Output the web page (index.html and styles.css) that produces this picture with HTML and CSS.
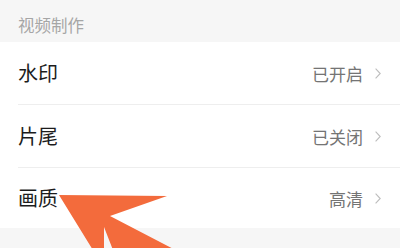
FILE: index.html
```html
<!DOCTYPE html>
<html lang="zh">
<head>
<meta charset="utf-8">
<link rel="stylesheet" href="styles.css">
</head>
<body>
<div class="page">
  <div class="section-title">视频制作</div>
  <div class="list">
    <div class="row">
      <span class="label">水印</span>
      <span class="value">已开启<svg class="chev" viewBox="0 0 6 11" width="6" height="11"><path d="M0.6 0.6 L5.2 5.5 L0.6 10.4" fill="none" stroke="#bdbdbd" stroke-width="1.1"/></svg></span>
    </div>
    <div class="row">
      <span class="label">片尾</span>
      <span class="value">已关闭<svg class="chev" viewBox="0 0 6 11" width="6" height="11"><path d="M0.6 0.6 L5.2 5.5 L0.6 10.4" fill="none" stroke="#bdbdbd" stroke-width="1.1"/></svg></span>
    </div>
    <div class="row last">
      <span class="label">画质</span>
      <span class="value">高清<svg class="chev" viewBox="0 0 6 11" width="6" height="11"><path d="M0.6 0.6 L5.2 5.5 L0.6 10.4" fill="none" stroke="#bdbdbd" stroke-width="1.1"/></svg></span>
    </div>
  </div>
  <div class="footer-band"></div>
  <svg class="arrow" viewBox="0 0 400 248" width="400" height="248">
    <polygon points="59,195 167,196 110,216 210,268 120,268 104,227 104,268" fill="#f36b3c"/>
  </svg>
</div>
</body>
</html>
```

FILE: styles.css
```css
* { box-sizing: border-box; }
html, body { margin: 0; padding: 0; }
body {
  width: 400px;
  height: 248px;
  overflow: hidden;
  background: #f6f6f6;
  font-family: "Noto Sans CJK SC", "Noto Sans", sans-serif;
}
.page {
  position: relative;
  width: 400px;
  height: 248px;
  display: flex;
  flex-direction: column;
}
.section-title {
  height: 42px;
  padding: 14px 0 0 18px;
  font-size: 16.5px;
  line-height: 22px;
  color: #a6a6a6;
  background: #f6f6f6;
}
.list {
  background: #ffffff;
  padding-left: 18px;
}
.row {
  height: 63px;
  display: flex;
  align-items: center;
  justify-content: space-between;
  padding-right: 19px;
  border-bottom: 1px solid #eeeeee;
}
.row.last { border-bottom: none; height: 60px; }
.label {
  font-size: 20px;
  color: #1c1c1c;
  line-height: 28px;
  margin-top: -1px;
}
.value {
  display: flex;
  align-items: center;
  font-size: 17px;
  color: #747474;
  gap: 12px;
}
.chev { display: block; }
.footer-band {
  flex: 1;
  background: #f6f6f6;
}
.arrow {
  position: absolute;
  left: 0;
  top: 0;
}
```
